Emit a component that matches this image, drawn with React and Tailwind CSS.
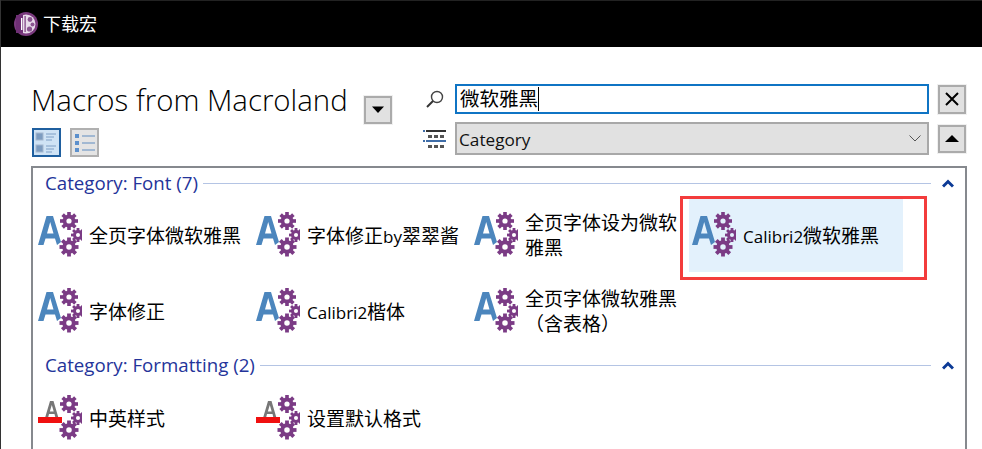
const sans = { fontFamily: '"Open Sans","Noto Sans CJK SC",sans-serif' };

function Gear({ cx, cy, r }) {
  const teeth = [];
  for (let i = 0; i < 8; i++) {
    teeth.push(
      <rect key={i} x={cx - r * 0.2} y={cy - r} width={r * 0.4} height={r * 0.5} fill="#7b3b85" transform={`rotate(${i * 45} ${cx} ${cy})`} />
    );
  }
  return (
    <g>
      {teeth}
      <circle cx={cx} cy={cy} r={r * 0.5} fill="none" stroke="#7b3b85" strokeWidth={r * 0.42} />
    </g>
  );
}

function Gears() {
  return (
    <>
      <Gear cx={31} cy={9} r={9} />
      <Gear cx={40} cy={23} r={7} />
      <Gear cx={31} cy={35} r={9.5} />
    </>
  );
}

function MacroIcon() {
  return (
    <svg width="44" height="46" viewBox="0 0 44 46" className="shrink-0">
      <path d="M0 33 L8.5 4 H15 L23 30 L19 33 L17 26.5 H7.5 L5.5 33 Z M9 21.5 H15.5 L12.2 10 Z" fill="#4c86bd" fillRule="evenodd" />
      <Gears />
    </svg>
  );
}

function FormatIcon() {
  return (
    <svg width="44" height="46" viewBox="0 0 44 46" className="shrink-0">
      <path d="M7 23 L12 6 H15.5 L20.5 23 H17.5 L16.5 19 H11 L10 23 Z M11.8 16.5 H15.7 L13.8 10 Z" fill="#777777" fillRule="evenodd" />
      <rect x="0" y="22" width="24" height="6" fill="#f01010" />
      <Gears />
    </svg>
  );
}

function Latin({ children }) {
  return <span className="text-[17px]">{children}</span>;
}

function Item({ icon, children, selected }) {
  return (
    <div className="flex h-[76px] items-center pr-1">
      <div className={`flex h-[73px] w-full items-center gap-[7px] pl-[3px] ${selected ? "bg-[#e3f1fc]" : ""}`}>
        {icon}
        <div className="pt-[2px] text-[19px] leading-[25px] text-black">{children}</div>
      </div>
    </div>
  );
}

function Section({ title, className }) {
  return (
    <div className={`flex items-center gap-[5px] pr-[11px] ${className}`}>
      <span className="text-[18.7px] leading-6 text-[#24349a]">{title}</span>
      <div className="h-px flex-1 bg-[#b4c4e4]" />
      <svg width="12" height="9" viewBox="0 0 12 9" className="ml-[6px]">
        <path d="M1 7.5 L6 2.5 L11 7.5" fill="none" stroke="#0c3a96" strokeWidth="3" />
      </svg>
    </div>
  );
}

function SquareBtn({ children, className = "" }) {
  return (
    <div className={`flex h-[28px] w-[28px] items-center justify-center border-2 border-[#ababab] bg-[#e1e1e1] outline outline-1 outline-[#f0f0f0] ${className}`}>
      {children}
    </div>
  );
}

export default function App() {
  return (
    <div style={sans} className="relative h-[449px] w-[982px] overflow-hidden border-l border-l-[#333] bg-white">
      <div className="flex h-[47px] items-center gap-[5px] border-t border-t-[#222] bg-black pl-[13px]">
        <svg width="24" height="24" viewBox="0 0 24 24">
          <circle cx="12" cy="12" r="12" fill="#7a3a7e" />
          <circle cx="12" cy="12" r="9.5" fill="#e8dcea" />
          <rect x="2" y="3" width="7" height="18" fill="#6e2f74" />
          <rect x="7" y="6" width="1.4" height="12" fill="#fff" />
          <rect x="10.5" y="4" width="1.2" height="16" fill="#7a3a7e" />
          <circle cx="16" cy="7.5" r="2.4" fill="#8a5590" />
          <circle cx="18.5" cy="12.5" r="2" fill="#8a5590" />
          <circle cx="15.5" cy="17" r="2.6" fill="#8a5590" />
        </svg>
        <span className="text-[18px] text-white">下载宏</span>
      </div>

      <div className="flex pl-[30px] pr-[16px] pt-[30px]">
        <div className="w-[395px]">
          <div className="flex h-[46px] items-center">
            <span className="w-[333px] text-[29.4px] font-light leading-[46px] text-black">Macros from Macroland</span>
            <SquareBtn className="mt-[20px]">
              <svg width="14" height="8" viewBox="0 0 14 8"><path d="M1 0.5 H13 L7 7 Z" fill="#000" /></svg>
            </SquareBtn>
          </div>
          <div className="mt-[5px] flex gap-[9px] pl-px">
            <div className="flex h-[29px] w-[29px] items-center justify-center border-2 border-[#1f5f9f] bg-[#cfe3f5]">
              <svg width="23" height="23" viewBox="0 0 23 23">
                <rect x="1" y="2" width="7" height="7" fill="#7d9cc0" stroke="#a5b8cf" />
                <rect x="1" y="14" width="7" height="7" fill="#7d9cc0" stroke="#a5b8cf" />
                <path d="M11 3 H21 M11 6 H19 M11 9 H17 M11 15 H21 M11 18 H19 M11 21 H17" stroke="#7f9fc5" strokeWidth="1" />
              </svg>
            </div>
            <div className="flex h-[29px] w-[29px] items-center justify-center border-2 border-[#b0b0b0] bg-[#e4e4e4]">
              <svg width="23" height="23" viewBox="0 0 23 23">
                <rect x="2" y="3" width="4" height="4" fill="#5c90cc" />
                <rect x="2" y="10" width="4" height="4" fill="#5c90cc" />
                <rect x="2" y="17" width="4" height="4" fill="#5c90cc" />
                <path d="M9 5 H22 M9 12 H22 M9 19 H22" stroke="#8aa9cc" strokeWidth="1.5" />
              </svg>
            </div>
          </div>
        </div>
        <div className="flex-1 pt-[7px]">
          <div className="flex h-[30px] items-center">
            <svg width="20" height="20" viewBox="0 0 20 20" className="ml-[-1px] mr-[10px]">
              <circle cx="12" cy="8" r="5.5" fill="none" stroke="#444" strokeWidth="1.4" />
              <path d="M8 12 L2 18" stroke="#333" strokeWidth="2" />
            </svg>
            <div className="flex h-[30px] flex-1 items-center border-2 border-[#0f74c4] pl-[3px] text-[19.5px] leading-none">
              <span>微软雅黑</span>
              <span className="h-[24px] w-px bg-black" />
            </div>
            <SquareBtn className="ml-[9px] h-[29px] w-[28px]">
              <svg width="14" height="14" viewBox="0 0 14 14"><path d="M1 1 L13 13 M13 1 L1 13" stroke="#000" strokeWidth="2" /></svg>
            </SquareBtn>
          </div>
          <div className="mt-[8px] flex h-[33px] items-center">
            <svg width="23" height="21" viewBox="0 0 23 21" className="ml-[-3px] mr-[9px]">
              <rect x="0" y="2" width="2" height="2" fill="#3f6da8" />
              <rect x="3" y="2" width="20" height="2" fill="#333" />
              <rect x="5" y="7" width="4" height="3" fill="#555" /><rect x="11" y="7" width="4" height="3" fill="#555" /><rect x="17" y="7" width="4" height="3" fill="#555" />
              <rect x="0" y="12" width="2" height="2" fill="#3f6da8" />
              <rect x="3" y="12" width="20" height="2" fill="#3f6da8" />
              <rect x="5" y="17" width="4" height="3" fill="#555" /><rect x="11" y="17" width="4" height="3" fill="#555" /><rect x="17" y="17" width="4" height="3" fill="#555" />
            </svg>
            <div className="flex h-[33px] flex-1 items-center justify-between border-2 border-[#a8a8a8] bg-[#e1e1e1] pl-[2px] pr-[6px] text-[17.2px] text-[#111]">
              <span className="pt-[3px]">Category</span>
              <svg width="12" height="7" viewBox="0 0 12 7"><path d="M0.5 0.5 L6 6 L11.5 0.5" fill="none" stroke="#555" strokeWidth="1" /></svg>
            </div>
            <SquareBtn className="ml-[9px]">
              <svg width="14" height="7" viewBox="0 0 14 7"><path d="M7 0 L14 7 H0 Z" fill="#000" /></svg>
            </SquareBtn>
          </div>
        </div>
      </div>

      <div className="ml-[30px] mr-[15px] mt-[9px] h-[300px] border-2 border-b-0 border-[#86898e] pl-[12px] pt-[3px]">
        <Section title="Category: Font (7)" className="h-[24px]" />
        <div className="ml-[-10px] mt-[2px] grid grid-cols-[218px_218px_218px_218px]">
          <Item icon={<MacroIcon />}>全页字体微软雅黑</Item>
          <Item icon={<MacroIcon />}>字体修正<Latin>by</Latin>翠翠酱</Item>
          <Item icon={<MacroIcon />}>全页字体设为微软雅黑</Item>
          <Item icon={<MacroIcon />} selected><Latin>Calibri2</Latin>微软雅黑</Item>
          <Item icon={<MacroIcon />}>字体修正</Item>
          <Item icon={<MacroIcon />}><Latin>Calibri2</Latin>楷体</Item>
          <Item icon={<MacroIcon />}>全页字体微软雅黑（含表格）</Item>
        </div>
        <Section title="Category: Formatting (2)" className="mt-[4px] h-[24px]" />
        <div className="ml-[-10px] mt-[3px] grid grid-cols-[218px_218px_218px_218px]">
          <Item icon={<FormatIcon />}>中英样式</Item>
          <Item icon={<FormatIcon />}>设置默认格式</Item>
        </div>
      </div>

      <div className="absolute left-[679px] top-[196px] h-[84px] w-[247px] border-[3px] border-[#f33c3c]" />
    </div>
  );
}
